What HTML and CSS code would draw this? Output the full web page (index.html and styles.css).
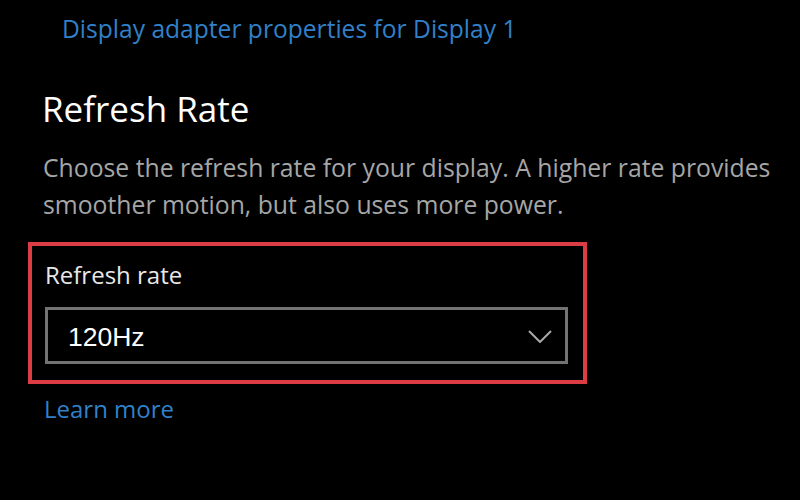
FILE: index.html
```html
<!DOCTYPE html>
<html lang="en">
<head>
<meta charset="utf-8">
<title>Refresh Rate</title>
<link rel="stylesheet" href="styles.css">
</head>
<body>
<main class="page">
  <a class="adapter-link" href="#">Display adapter properties for Display 1</a>
  <h1 class="heading">Refresh Rate</h1>
  <p class="description">Choose the refresh rate for your display. A higher rate provides smoother motion, but also uses more power.</p>
  <section class="highlight">
    <div class="field-label">Refresh rate</div>
    <div class="dropdown">
      <span class="dropdown-value">120Hz</span>
      <svg class="chevron" width="24" height="13" viewBox="0 0 24 13" aria-hidden="true">
        <polyline points="1,1 12,12 23,1" fill="none" stroke="#a8a8a8" stroke-width="2"/>
      </svg>
    </div>
  </section>
  <a class="learn-more" href="#">Learn more</a>
</main>
</body>
</html>
```

FILE: styles.css
```css
html, body {
  margin: 0;
  padding: 0;
  background: #000;
}

body {
  width: 800px;
  height: 500px;
  overflow: hidden;
  font-family: "Open Sans", "Noto Sans", sans-serif;
  color: #fff;
}

.page {
  display: flex;
  flex-direction: column;
  align-items: flex-start;
  padding: 13.5px 0 0 42px;
}

.adapter-link {
  margin-left: 20px;
  font-size: 24.6px;
  line-height: 30px;
  color: #3180c8;
  text-decoration: none;
}

.heading {
  margin: 43px 0 0 0;
  font-size: 35px;
  font-weight: 400;
  line-height: 44px;
  color: #fff;
}

.description {
  margin: 18px 0 0 1px;
  width: 750px;
  font-size: 24.75px;
  line-height: 37px;
  color: #a6a6a6;
}

.highlight {
  margin: 19px 0 0 -14px;
  width: 559px;
  box-sizing: border-box;
  border: 4px solid #dc3d45;
  padding: 14.7px 15px 16px 13px;
  display: flex;
  flex-direction: column;
  gap: 17px;
}

.field-label {
  font-size: 24px;
  line-height: 30px;
  color: #e8e8e8;
}

.dropdown {
  height: 57px;
  box-sizing: border-box;
  border: 3px solid #737373;
  display: flex;
  align-items: center;
  justify-content: space-between;
  padding: 0 13px 0 20px;
}

.dropdown-value {
  font-family: "Liberation Sans", Arial, sans-serif;
  font-size: 26.5px;
  line-height: 30px;
  color: #fff;
  margin-top: 2px;
}

.chevron {
  display: block;
  margin-top: 2px;
}

.learn-more {
  margin: 10px 0 0 2px;
  font-size: 24px;
  line-height: 30px;
  color: #3180c8;
  text-decoration: none;
}
```
